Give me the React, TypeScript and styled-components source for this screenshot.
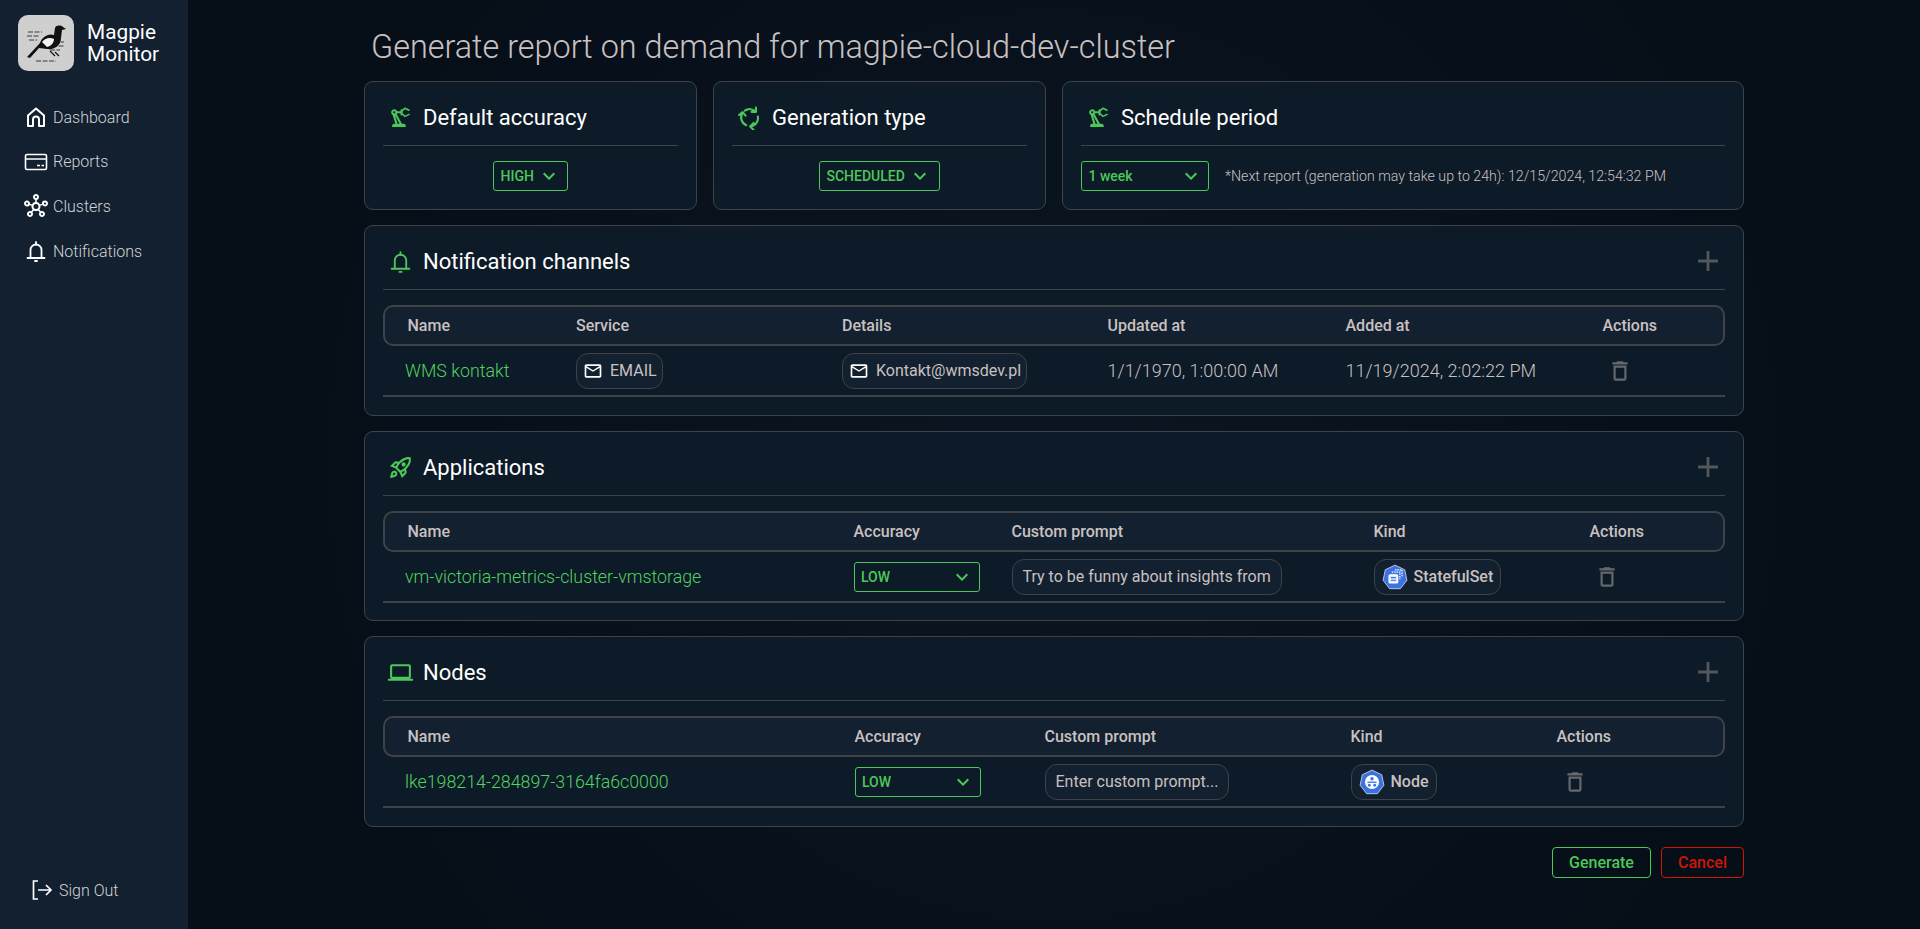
import React from 'react';
import styled, { createGlobalStyle } from 'styled-components';
import {
  MdAdd,
  MdDeleteOutline,
  MdKeyboardArrowDown,
  MdMailOutline,
  MdOutlineHub,
  MdOutlineLaptop,
  MdOutlinePrecisionManufacturing,
  MdOutlineRocketLaunch,
} from 'react-icons/md';

const GREEN = '#4cc85a';
const TEXT = '#c9c1c1';
const LINE = '#3f4347';

const GlobalStyle = createGlobalStyle`
  html, body {
    margin: 0;
    padding: 0;
    background: #060e18;
    font-family: Roboto, "Liberation Sans", sans-serif;
  }
  * { box-sizing: border-box; }
`;

const Page = styled.div`
  display: flex;
  min-height: 100vh;
`;

const Sidebar = styled.aside`
  width: 188px;
  flex-shrink: 0;
  background: #12202f;
  display: flex;
  flex-direction: column;
  padding: 15px 0 25px;
`;

const Brand = styled.div`
  display: flex;
  align-items: center;
  gap: 13px;
  padding-left: 18px;
  margin-bottom: 24px;
`;

const LogoBox = styled.div`
  width: 56px;
  height: 56px;
  border-radius: 10px;
  background: #cfcfcf;
  display: flex;
  align-items: center;
  justify-content: center;
`;

const BrandName = styled.div`
  color: #fff;
  font-size: 20.8px;
  line-height: 22px;
`;

const NavList = styled.nav`
  display: flex;
  flex-direction: column;
  flex: 1;
`;

const NavItem = styled.div`
  height: 44.6px;
  display: flex;
  align-items: center;
  gap: 5px;
  padding-left: 24px;
  font-size: 16px;
  font-weight: 300;
  color: #d4d4d8;

  svg {
    width: 24px;
    height: 24px;
    color: #fff;
    flex-shrink: 0;
  }
`;

const SignOut = styled(NavItem)`
  padding-left: 30px;
  height: 28px;
  color: #d4d4d8;
`;

const Main = styled.main`
  flex: 1;
  padding: 28px 176px 0;
  background: radial-gradient(circle at 50% 50%, #0b1622 0%, #060e18 75%);
`;

const Title = styled.h1`
  margin: 0 0 15px 7px;
  font-size: 32.4px;
  line-height: 38px;
  font-weight: 300;
  color: ${TEXT};
`;

const TopRow = styled.div`
  display: grid;
  grid-template-columns: 333px 333px 1fr;
  gap: 16px;
  margin-bottom: 15px;
`;

const Card = styled.section<{ $height: number }>`
  background: #0d1a27;
  border: 1px solid ${LINE};
  border-radius: 9px;
  padding: 0 18px;
  height: ${(p) => p.$height}px;
  margin-bottom: 15px;

  ${TopRow} & {
    margin-bottom: 0;
  }
`;

const CardHead = styled.div`
  height: 64px;
  display: flex;
  align-items: center;
  gap: 10px;
  padding: 7px 0 0 5px;
  border-bottom: 1px solid ${LINE};
  color: #fff;
  font-size: 22px;
  position: relative;

  > svg {
    width: 25px;
    height: 25px;
    color: ${GREEN};
    flex-shrink: 0;
  }
`;

const AddButton = styled.span`
  margin-left: auto;
  display: flex;
  color: #53575b;

  svg {
    width: 34px;
    height: 34px;
  }
`;

const CardBody = styled.div<{ $center?: boolean }>`
  display: flex;
  align-items: center;
  justify-content: ${(p) => (p.$center ? 'center' : 'flex-start')};
  gap: 16px;
  padding-top: 15px;
`;

const Select = styled.div<{ $width: number; $spread?: boolean }>`
  width: ${(p) => p.$width}px;
  height: 30px;
  border: 1px solid ${GREEN};
  border-radius: 3px;
  display: flex;
  align-items: center;
  justify-content: ${(p) => (p.$spread ? 'space-between' : 'flex-start')};
  gap: 3px;
  padding: 0 5px 0 6.5px;
  color: ${GREEN};
  font-size: 14px;
  font-weight: 500;

  svg {
    width: 24px;
    height: 24px;
    flex-shrink: 0;
  }
`;

const NextReport = styled.span`
  color: ${TEXT};
  font-size: 14.2px;
  font-weight: 300;
`;

const TableHead = styled.div<{ $cols: string }>`
  margin-top: 15px;
  height: 41px;
  display: grid;
  grid-template-columns: ${(p) => p.$cols};
  align-items: center;
  padding-left: 22.5px;
  background: #12202f;
  border: 2px solid ${LINE};
  border-radius: 10px;
  color: ${TEXT};
  font-size: 16px;
  font-weight: 500;
`;

const TableRow = styled.div<{ $cols: string }>`
  height: 51px;
  display: grid;
  grid-template-columns: ${(p) => p.$cols};
  align-items: center;
  padding-left: 24.5px;
  border-bottom: 2px solid ${LINE};
  color: ${TEXT};
  font-size: 18px;
  font-weight: 300;
`;

const NameCell = styled.span`
  color: #52d260;
  font-size: 17.8px;
  font-weight: 300;
  margin-left: -2.5px;
`;

const Pill = styled.span`
  justify-self: start;
  height: 36px;
  display: inline-flex;
  align-items: center;
  gap: 7px;
  padding: 0 5px 0 6px;
  background: #12202f;
  border: 1px solid ${LINE};
  border-radius: 12px;
  font-size: 16px;
  font-weight: 400;
  color: ${TEXT};
  white-space: nowrap;

  > svg {
    width: 20px;
    height: 20px;
    color: #fff;
    flex-shrink: 0;
  }
`;

const PromptPill = styled(Pill)`
  padding: 0 10px;
`;

const KindPill = styled(Pill)`
  padding: 0 7px;
  gap: 6px;
  font-weight: 500;

  > svg {
    width: 26px;
    height: 26px;
  }
`;

const TrashCell = styled.span<{ $offset: number }>`
  display: flex;
  margin-left: ${(p) => p.$offset}px;
  color: #65696d;

  svg {
    width: 26px;
    height: 26px;
  }
`;

const Footer = styled.div`
  display: flex;
  justify-content: flex-end;
  gap: 10px;
  margin-top: 20px;
`;

const ActionButton = styled.button<{ $color: string; $width: number }>`
  width: ${(p) => p.$width}px;
  height: 31px;
  background: transparent;
  border: 1px solid ${(p) => p.$color};
  border-radius: 4px;
  color: ${(p) => p.$color};
  font-family: inherit;
  font-size: 16px;
  font-weight: 500;
`;

const HomeIcon = () => (
  <svg viewBox="0 0 24 24" fill="none" stroke="currentColor" strokeWidth="2">
    <path d="M4 21V10.5L12 3.5l8 7V21h-5v-6.5a3 3 0 0 0-6 0V21H4z" strokeLinejoin="round" />
  </svg>
);

const ReportsIcon = () => (
  <svg viewBox="0 0 24 24" fill="none" stroke="currentColor" strokeWidth="1.6">
    <rect x="1.5" y="4.5" width="21" height="15" rx="1.5" />
    <path d="M1.5 9h21M13 15.5h3M17.5 15.5h2.5" />
  </svg>
);

const BellIcon = () => (
  <svg viewBox="0 0 24 24" fill="none" stroke="currentColor" strokeWidth="1.8">
    <path d="M6.5 19v-8a5.5 5.5 0 0 1 11 0v8M3.5 19h17" strokeLinecap="round" />
    <path d="M12 3v2.5M11 22h2" strokeLinecap="round" />
  </svg>
);

const SignOutIcon = () => (
  <svg viewBox="0 0 24 24" fill="none" stroke="currentColor" strokeWidth="1.7">
    <path d="M8 3H3.5v18H8M8 12h13M16 7l5 5-5 5" />
  </svg>
);

const CycleIcon = () => (
  <svg viewBox="0 0 24 24" fill="none" stroke="currentColor" strokeWidth="2" strokeLinecap="round" strokeLinejoin="round">
    <path d="M7.5 5.4A8 8 0 0 1 17.6 6.2M18.2 2.4v4.2h-4.2" />
    <path d="M20 11a8 8 0 0 1-7.2 9.6M16 24l-3.4-3.4 3.4-3.4" />
    <path d="M9 19.4A8 8 0 0 1 5.4 7.4M2 9.6l3.4-2.8 2.8 3.4" />
  </svg>
);

const MagpieLogo = () => (
  <svg width="44" height="44" viewBox="0 0 44 44">
    <g stroke="#3a3a3a" strokeWidth="1" strokeDasharray="5 1.5">
      <path d="M4 11h14M3 15h12M5 19h8M30 21h10M28 25h12M26 29h10" />
      <path d="M12 40h20" />
    </g>
    <path d="M3 36 16 22c2-6 8-10 14-8l1-7c1-3 6-3 8-1l3 2-4 1-1 8c0 7-6 12-14 11l-8-1L6 37z" fill="#111" />
    <path d="M18 21c3-4 8-5 12-3 0 4-3 7-7 8z" fill="#f2f2f2" />
    <path d="M26 30l5 5M31 31l4 4" stroke="#111" strokeWidth="1.2" />
  </svg>
);

const K8sIcon = ({ kind }: { kind: 'set' | 'node' }) => (
  <svg viewBox="0 0 24 24">
    <path d="M12 1 21 5.3 23 15 17 22.8H7L1 15 3 5.3z" fill="#3b72e0" stroke="#fff" strokeWidth=".6" />
    {kind === 'set' ? (
      <g fill="none" stroke="#fff" strokeWidth="1.1">
        <rect x="6.5" y="10" width="8" height="7.5" rx="1" fill="#dfe8fb" />
        <path d="M9 7.5h7.5V14M12 5.5h6.5V12" strokeDasharray="1.4 .8" />
        <path d="M8.2 12.5h4.6M8.2 15h4.6" stroke="#3b72e0" />
      </g>
    ) : (
      <g fill="#fff">
        <circle cx="12" cy="12" r="6.5" />
        <circle cx="12" cy="9" r="1.6" fill="#3b72e0" />
        <rect x="7.8" y="11.6" width="8.4" height="1.2" fill="#3b72e0" />
        <circle cx="9.5" cy="15" r="1.3" fill="#3b72e0" />
        <circle cx="14.5" cy="15" r="1.3" fill="#3b72e0" />
      </g>
    )}
  </svg>
);

const channelCols = '168.5px 266px 265.5px 238px 257px 1fr';
const appCols = '446px 158px 362px 216px 1fr';
const nodeCols = '447px 190px 306px 206px 1fr';

const App: React.FC = () => {
  return (
    <>
      <GlobalStyle />
      <Page>
        <Sidebar>
          <Brand>
            <LogoBox>
              <MagpieLogo />
            </LogoBox>
            <BrandName>
              Magpie
              <br />
              Monitor
            </BrandName>
          </Brand>
          <NavList>
            <NavItem><HomeIcon />Dashboard</NavItem>
            <NavItem><ReportsIcon />Reports</NavItem>
            <NavItem><MdOutlineHub />Clusters</NavItem>
            <NavItem><BellIcon />Notifications</NavItem>
          </NavList>
          <SignOut><SignOutIcon />Sign Out</SignOut>
        </Sidebar>

        <Main>
          <Title>Generate report on demand for magpie-cloud-dev-cluster</Title>

          <TopRow>
            <Card $height={129}>
              <CardHead><MdOutlinePrecisionManufacturing />Default accuracy</CardHead>
              <CardBody $center>
                <Select $width={75}>HIGH<MdKeyboardArrowDown /></Select>
              </CardBody>
            </Card>
            <Card $height={129}>
              <CardHead><CycleIcon />Generation type</CardHead>
              <CardBody $center>
                <Select $width={121}>SCHEDULED<MdKeyboardArrowDown /></Select>
              </CardBody>
            </Card>
            <Card $height={129}>
              <CardHead><MdOutlinePrecisionManufacturing />Schedule period</CardHead>
              <CardBody>
                <Select $width={128} $spread>1 week<MdKeyboardArrowDown /></Select>
                <NextReport>*Next report (generation may take up to 24h): 12/15/2024, 12:54:32 PM</NextReport>
              </CardBody>
            </Card>
          </TopRow>

          <Card $height={191}>
            <CardHead>
              <BellIcon />Notification channels
              <AddButton><MdAdd /></AddButton>
            </CardHead>
            <TableHead $cols={channelCols}>
              <span>Name</span>
              <span>Service</span>
              <span>Details</span>
              <span>Updated at</span>
              <span>Added at</span>
              <span>Actions</span>
            </TableHead>
            <TableRow $cols={channelCols}>
              <NameCell>WMS kontakt</NameCell>
              <Pill><MdMailOutline />EMAIL</Pill>
              <Pill><MdMailOutline />Kontakt@wmsdev.pl</Pill>
              <span>1/1/1970, 1:00:00 AM</span>
              <span>11/19/2024, 2:02:22 PM</span>
              <TrashCell $offset={4}><MdDeleteOutline /></TrashCell>
            </TableRow>
          </Card>

          <Card $height={190}>
            <CardHead>
              <MdOutlineRocketLaunch />Applications
              <AddButton><MdAdd /></AddButton>
            </CardHead>
            <TableHead $cols={appCols}>
              <span>Name</span>
              <span>Accuracy</span>
              <span>Custom prompt</span>
              <span>Kind</span>
              <span>Actions</span>
            </TableHead>
            <TableRow $cols={appCols}>
              <NameCell>vm-victoria-metrics-cluster-vmstorage</NameCell>
              <Select $width={126} $spread>LOW<MdKeyboardArrowDown /></Select>
              <PromptPill>Try to be funny about insights from</PromptPill>
              <KindPill><K8sIcon kind="set" />StatefulSet</KindPill>
              <TrashCell $offset={4}><MdDeleteOutline /></TrashCell>
            </TableRow>
          </Card>

          <Card $height={191}>
            <CardHead>
              <MdOutlineLaptop />Nodes
              <AddButton><MdAdd /></AddButton>
            </CardHead>
            <TableHead $cols={nodeCols}>
              <span>Name</span>
              <span>Accuracy</span>
              <span>Custom prompt</span>
              <span>Kind</span>
              <span>Actions</span>
            </TableHead>
            <TableRow $cols={nodeCols}>
              <NameCell>lke198214-284897-3164fa6c0000</NameCell>
              <Select $width={126} $spread>LOW<MdKeyboardArrowDown /></Select>
              <PromptPill>Enter custom prompt...</PromptPill>
              <KindPill><K8sIcon kind="node" />Node</KindPill>
              <TrashCell $offset={5}><MdDeleteOutline /></TrashCell>
            </TableRow>
          </Card>

          <Footer>
            <ActionButton $color={GREEN} $width={99}>Generate</ActionButton>
            <ActionButton $color="#d01505" $width={83}>Cancel</ActionButton>
          </Footer>
        </Main>
      </Page>
    </>
  );
};

export default App;
